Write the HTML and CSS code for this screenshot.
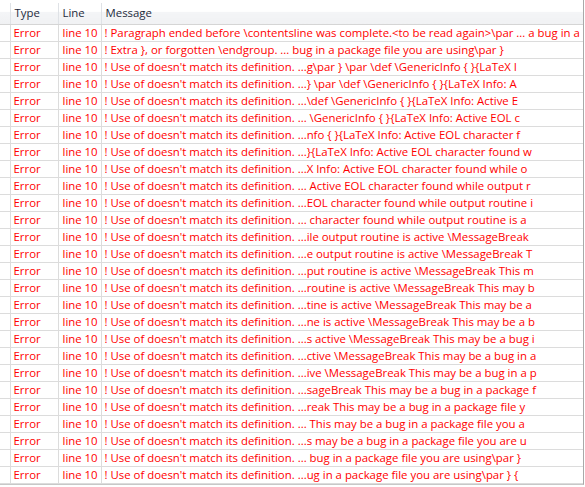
FILE: index.html
```html
<!DOCTYPE html>
<html>
<head>
<meta charset="utf-8">
<link rel="stylesheet" href="styles.css">
</head>
<body>
<div class="view">
  <table class="list">
    <colgroup>
      <col class="c0"><col class="c1"><col class="c2"><col class="c3">
    </colgroup>
    <thead>
      <tr><th></th><th>Type</th><th class="ln">Line</th><th>Message</th></tr>
    </thead>
    <tbody>
      <tr><td></td><td>Error</td><td class="ln">line 10</td><td>! Paragraph ended before \contentsline was complete.&lt;to be read again&gt;\par ... a bug in a</td></tr>
      <tr><td></td><td>Error</td><td class="ln">line 10</td><td>! Extra }, or forgotten \endgroup. ... bug in a package file you are using\par }</td></tr>
      <tr><td></td><td>Error</td><td class="ln">line 10</td><td>! Use of doesn't match its definition. ...g\par } \par \def \GenericInfo { }{LaTeX I</td></tr>
      <tr><td></td><td>Error</td><td class="ln">line 10</td><td>! Use of doesn't match its definition. ...} \par \def \GenericInfo { }{LaTeX Info: A</td></tr>
      <tr><td></td><td>Error</td><td class="ln">line 10</td><td>! Use of doesn't match its definition. ...\def \GenericInfo { }{LaTeX Info: Active E</td></tr>
      <tr><td></td><td>Error</td><td class="ln">line 10</td><td>! Use of doesn't match its definition. ... \GenericInfo { }{LaTeX Info: Active EOL c</td></tr>
      <tr><td></td><td>Error</td><td class="ln">line 10</td><td>! Use of doesn't match its definition. ...nfo { }{LaTeX Info: Active EOL character f</td></tr>
      <tr><td></td><td>Error</td><td class="ln">line 10</td><td>! Use of doesn't match its definition. ...}{LaTeX Info: Active EOL character found w</td></tr>
      <tr><td></td><td>Error</td><td class="ln">line 10</td><td>! Use of doesn't match its definition. ...X Info: Active EOL character found while o</td></tr>
      <tr><td></td><td>Error</td><td class="ln">line 10</td><td>! Use of doesn't match its definition. ... Active EOL character found while output r</td></tr>
      <tr><td></td><td>Error</td><td class="ln">line 10</td><td>! Use of doesn't match its definition. ...EOL character found while output routine i</td></tr>
      <tr><td></td><td>Error</td><td class="ln">line 10</td><td>! Use of doesn't match its definition. ... character found while output routine is a</td></tr>
      <tr><td></td><td>Error</td><td class="ln">line 10</td><td>! Use of doesn't match its definition. ...ile output routine is active \MessageBreak</td></tr>
      <tr><td></td><td>Error</td><td class="ln">line 10</td><td>! Use of doesn't match its definition. ...e output routine is active \MessageBreak T</td></tr>
      <tr><td></td><td>Error</td><td class="ln">line 10</td><td>! Use of doesn't match its definition. ...put routine is active \MessageBreak This m</td></tr>
      <tr><td></td><td>Error</td><td class="ln">line 10</td><td>! Use of doesn't match its definition. ...routine is active \MessageBreak This may b</td></tr>
      <tr><td></td><td>Error</td><td class="ln">line 10</td><td>! Use of doesn't match its definition. ...tine is active \MessageBreak This may be a</td></tr>
      <tr><td></td><td>Error</td><td class="ln">line 10</td><td>! Use of doesn't match its definition. ...ne is active \MessageBreak This may be a b</td></tr>
      <tr><td></td><td>Error</td><td class="ln">line 10</td><td>! Use of doesn't match its definition. ...s active \MessageBreak This may be a bug i</td></tr>
      <tr><td></td><td>Error</td><td class="ln">line 10</td><td>! Use of doesn't match its definition. ...ctive \MessageBreak This may be a bug in a</td></tr>
      <tr><td></td><td>Error</td><td class="ln">line 10</td><td>! Use of doesn't match its definition. ...ive \MessageBreak This may be a bug in a p</td></tr>
      <tr><td></td><td>Error</td><td class="ln">line 10</td><td>! Use of doesn't match its definition. ...sageBreak This may be a bug in a package f</td></tr>
      <tr><td></td><td>Error</td><td class="ln">line 10</td><td>! Use of doesn't match its definition. ...reak This may be a bug in a package file y</td></tr>
      <tr><td></td><td>Error</td><td class="ln">line 10</td><td>! Use of doesn't match its definition. ... This may be a bug in a package file you a</td></tr>
      <tr><td></td><td>Error</td><td class="ln">line 10</td><td>! Use of doesn't match its definition. ...s may be a bug in a package file you are u</td></tr>
      <tr><td></td><td>Error</td><td class="ln">line 10</td><td>! Use of doesn't match its definition. ... bug in a package file you are using\par }</td></tr>
      <tr><td></td><td>Error</td><td class="ln">line 10</td><td>! Use of doesn't match its definition. ...ug in a package file you are using\par } {</td></tr>
    </tbody>
  </table>
</div>
</body>
</html>
```
FILE: styles.css
```css
html, body {
  margin: 0;
  padding: 0;
  background: #ffffff;
}
body {
  font-family: "Open Sans", "Segoe UI", sans-serif;
  font-size: 11.4px;
  width: 585px;
  height: 487px;
  overflow: hidden;
}
.view {
  width: 584px;
  height: 485px;
  padding-top: 3px;
  border-right: 1px solid #a9a9a9;
  border-bottom: 1px solid #c8c8c8;
  overflow: hidden;
  box-sizing: border-box;
}
.list {
  border-collapse: collapse;
  table-layout: fixed;
  width: 700px;
}
.c0 { width: 10px; }
.c1 { width: 48px; }
.c2 { width: 43px; }
.c3 { width: 599px; }
.list th, .list td {
  white-space: nowrap;
  overflow: hidden;
  text-align: left;
  padding: 0 0 0 3px;
  box-sizing: border-box;
}
.list thead th {
  height: 21px;
  font-weight: normal;
  color: #1e2b3d;
  background: linear-gradient(#ffffff 0%, #ffffff 40%, #f4f5f7 45%, #f0f1f3 100%);
  border-right: 1px solid #dfe2e6;
  border-bottom: 1px solid #d5d5d5;
  line-height: 20px;
  padding-left: 4px;
}
.list thead th:first-child { padding: 0; }
.list td {
  height: 17px;
  line-height: 16px;
  color: #ff0000;
  border-right: 1px solid #dcdcdc;
  border-bottom: 1px solid #dcdcdc;
}
.list td:first-child { padding: 0; }
.list td.ln { padding-left: 4px; }
```
